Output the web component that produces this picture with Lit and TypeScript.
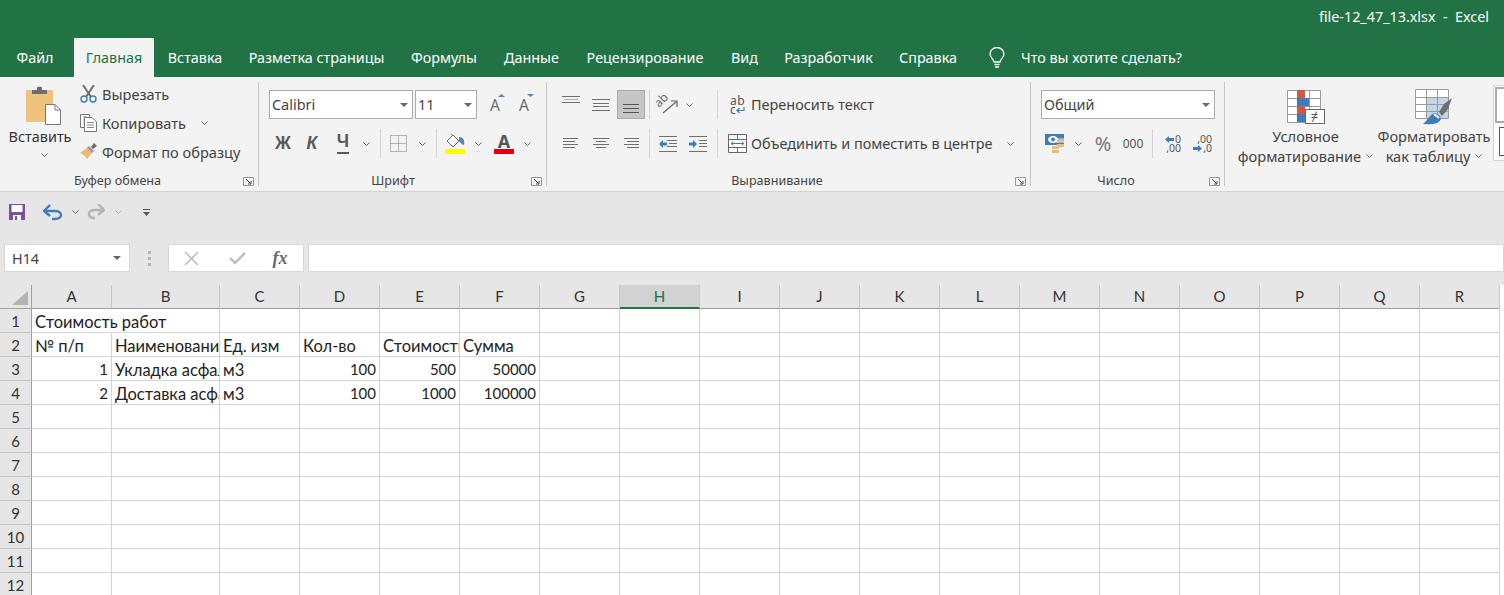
import { LitElement, html, css, TemplateResult } from 'lit';
import { customElement } from 'lit/decorators.js';
import { styleMap } from 'lit/directives/style-map.js';

type Tool = { w: number; sep?: boolean; icon?: TemplateResult; cls?: string };

// ---- small shared icons ----
const chev = html`<svg width="7" height="4" viewBox="0 0 7 4"><path d="M.5.5 3.5 3.5 6.5.5" fill="none" stroke="#666"/></svg>`;
const drop = html`<svg width="8" height="4" viewBox="0 0 8 4"><path d="M0 0H8L4 4Z" fill="#666"/></svg>`;
const launcher = html`<svg width="11" height="9" viewBox="0 0 11 9"><path d="M.5 8.5V.5H10.5V8.5H.5" fill="none" stroke="#999"/><path d="M3 2 8 7M8 4V7H5" fill="none" stroke="#555"/></svg>`;

const lines = (rows: [number, number][], w = 18, h = 14, col = '#6f6f6f') => html`
  <svg width=${w} height=${h} viewBox="0 0 ${w} ${h}">
    <path d=${rows.map((r, i) => `M${r[0]} ${i * 3 + 1.5}H${r[1]}`).join('')} fill="none" stroke=${col}/>
  </svg>`;

const alignTop = html`<svg width="18" height="18" viewBox="0 0 18 18"><path d="M0 .5H18M0 6.500H18" fill="none" stroke="#6f6f6f"/><path d="M2 3.500H16" fill="none" stroke="#b0b0b0"/></svg>`;
const alignMid = html`<svg width="18" height="14" viewBox="0 0 18 14"><path d="M0 1.500H18M1 5.500H17M1 8.500H17M0 12.500H18" fill="none" stroke="#6f6f6f"/></svg>`;
const alignBot = html`<svg width="18" height="18" viewBox="0 0 18 18"><path d="M1 8.500H17M1 12.500H17M1 16.500H17" fill="none" stroke="#555"/></svg>`;

const paste = html`<svg width="36" height="39" viewBox="0 0 36 39">
  <rect x="0" y="4" width="27" height="32" rx="1" fill="#edc37e"/>
  <path d="M6 8V4H11V1.5C11 .5 16 .5 16 1.5V4H21V8Z" fill="#6e6e6e"/>
  <path d="M19.5 18.5H29L34.500 24V38.500H19.500Z" fill="#fff" stroke="#777"/>
  <path d="M29 18.500V24H34.500" fill="none" stroke="#777"/>
</svg>`;
const scissors = html`<svg width="17" height="18" viewBox="0 0 17 18">
  <path d="M3 0 11 12M14 0 6 12" stroke="#6e6e6e" stroke-width="2" fill="none"/>
  <circle cx="4" cy="14" r="3" fill="none" stroke="#3f7cb9" stroke-width="1.400"/>
  <circle cx="13" cy="14" r="3" fill="none" stroke="#3f7cb9" stroke-width="1.400"/>
</svg>`;
const copy = html`<svg width="17" height="18" viewBox="0 0 17 18">
  <path d="M9.500 3.500V.5H.5V13.500H4.500" fill="#fff" stroke="#777"/>
  <path d="M4.500 3.500H12L16.500 8V17.500H4.500Z" fill="#fff" stroke="#777"/>
  <path d="M3 3H7M3 6H5M3 9H4M7 8.500H14M7 11H14M7 13.500H14" stroke="#888" fill="none"/>
</svg>`;
const painter = html`<svg width="17" height="17" viewBox="0 0 17 17">
  <path d="M0 10 7 5 12 10 7 16C5 13 3 11 0 10Z" fill="#e8bb76"/>
  <path d="M7 5 9 3 14 8 12 10Z" fill="#9a9a9a"/>
  <path d="M11 4 14 0 17 3 13 6Z" fill="#6a6a6a"/>
</svg>`;

const growA = (up: boolean) => html`<span class="grow">A<svg class="grow-tri" width="7" height="3" viewBox="0 0 7 3">
  <path d=${up ? 'M0 3 3.500 0 7 3Z' : 'M0 0H7L3.500 3Z'} fill="#4f86bd"/>
</svg></span>`;
const borders = html`<svg width="17" height="17" viewBox="0 0 17 17">
  <path d="M.5.5H16.500V16.500H.5ZM8.500.5V16.500M.5 8.500H16.500" fill="none" stroke="#777" stroke-dasharray="1 1"/>
</svg>`;
const fillColor = html`<svg width="21" height="21" viewBox="0 0 21 21">
  <path d="M2 8 8 2 14 8 8 14Z" fill="#fff" stroke="#666"/>
  <path d="M6 1 8 3" stroke="#666"/>
  <path d="M14 4C18 4 20 7 19 12 17 12 15 9 14 8Z" fill="#4f86bd"/>
  <rect x="0" y="16" width="20" height="5" fill="#ffff00"/>
</svg>`;
const fontColor = html`<span class="fcolor"><span class="fcolor-a">A</span><span class="fcolor-bar"></span></span>`;
const orientation = html`<svg width="22" height="20" viewBox="0 0 22 20">
  <text x="3" y="13" transform="rotate(-45 3 13)" font-family="Noto Sans" font-size="12" fill="#666">ab</text>
  <path d="M7 18 20 7M15 6H21V12" fill="none" stroke="#666" stroke-width="1.200"/>
</svg>`;
const indentDec = html`<svg width="18" height="16" viewBox="0 0 18 16">
  <path d="M0 .5H18M8 4.500H18M10 7.500H18M8 10.500H18M0 15.500H18" stroke="#6f6f6f" fill="none"/>
  <path d="M0 8 4 4V6.500H8V9.500H4V12Z" fill="#3f7cb9"/>
</svg>`;
const indentInc = html`<svg width="18" height="16" viewBox="0 0 18 16">
  <path d="M0 .5H18M10 4.500H18M10 7.500H18M10 10.500H18M0 15.500H18" stroke="#6f6f6f" fill="none"/>
  <path d="M8 8 4 4V6.500H0V9.500H4V12Z" fill="#3f7cb9"/>
</svg>`;
const wrap = html`<span class="wrapi"><span>ab</span><span class="wrapi-2">c<svg width="9" height="7" viewBox="0 0 9 7">
  <path d="M8 0V3.500H1M3.500 1 1 3.500 3.500 6" fill="none" stroke="#3f7cb9" stroke-width="1.200"/>
</svg></span></span>`;
const merge = html`<svg width="19" height="19" viewBox="0 0 19 19">
  <path d="M.5.5H18.500V18.500H.5ZM.5 5.500H18.500M.5 13.500H18.500M9.500.5V5.500M9.500 13.500V18.500" fill="#fff" stroke="#666"/>
  <path d="M3 9.500H16M5.500 7.500 3 9.500 5.500 11.500M13.500 7.500 16 9.500 13.500 11.500" fill="none" stroke="#3f7cb9"/>
</svg>`;
const currency = html`<svg width="20" height="19" viewBox="0 0 20 19">
  <rect x="0" y="0" width="19" height="11" fill="#3f7cb9"/>
  <ellipse cx="8" cy="5.500" rx="5" ry="3.500" fill="#fff"/>
  <circle cx="8" cy="5.500" r="2" fill="#3f7cb9"/>
  <path d="M7 11.500H13M11 5H19M11 8H19" stroke="#f3f3f3" fill="none"/>
  <path d="M12 6H19V9H12ZM12 10H19V13H12ZM7 12H14V15H7ZM7 16H14V19H7Z" fill="#e9bd78"/>
</svg>`;
const arrowL = html`<svg width="9" height="7" viewBox="0 0 9 7"><path d="M0 3.500 4 0V2H9V5H4V7Z" fill="#3f7cb9"/></svg>`;
const arrowR = html`<svg width="9" height="7" viewBox="0 0 9 7"><path d="M9 3.500 5 0V2H0V5H5V7Z" fill="#3f7cb9"/></svg>`;
const decLeft = html`<span class="dec"><span class="dec-r">${arrowL}<span>0</span></span><span class="dec-r dec-end">,00</span></span>`;
const decRight = html`<span class="dec"><span class="dec-r dec-end">,00</span><span class="dec-r">${arrowR}<span>,0</span></span></span>`;
const condFormat = html`<span class="cf"><svg width="38" height="34" viewBox="0 0 38 34">
  <path d="M.5.5H33.500V32.500H.5ZM10.500.5V32.500M22.500.5V32.500M.5 8.500H33.500M.5 16.500H33.500M.5 24.500H33.500" fill="#fff" stroke="#9a9a9a"/>
  <rect x="10" y="0" width="8" height="8" fill="#d0593f"/>
  <rect x="10" y="8" width="12" height="8" fill="#3f7cb9"/>
  <rect x="10" y="16" width="8" height="8" fill="#d0593f"/>
  <rect x="10" y="24" width="8" height="8" fill="#3f7cb9"/>
  <rect x="18.500" y="19.500" width="19" height="14" fill="#fff" stroke="#666"/>
</svg><span class="cf-ne">≠</span></span>`;
const tableFormat = html`<svg width="38" height="36" viewBox="0 0 38 36">
  <path d="M.5.5H33.500V29.500H.5Z" fill="#fff"/>
  <rect x="11" y="8" width="22" height="22" fill="#c4d5e8"/>
  <path d="M.5.5H33.500V29.500H.5ZM11.500.5V29.500M22.500.5V29.500M.5 8.500H33.500M.5 15.500H33.500M.5 22.500H33.500" fill="none" stroke="#9a9a9a"/>
  <path d="M37 9 29 15 24 23 27 27 33 20Z" fill="#6e6e6e"/>
  <path d="M8 35C12 32 14 27 19 24 22 24 26 27 26 30 24 35 16 36 8 35Z" fill="#3f7cb9"/>
  <path d="M19 25 24 29" stroke="#fff" stroke-width="2"/>
</svg>`;

// ---- data ----
const tabs = [
  { label: 'Файл', w: 70 }, { label: '', w: 4 }, { label: 'Главная', w: 80, active: true }, { label: 'Вставка', w: 82 },
  { label: 'Разметка страницы', w: 161 }, { label: 'Формулы', w: 94 }, { label: 'Данные', w: 81 },
  { label: 'Рецензирование', w: 146 }, { label: 'Вид', w: 53 }, { label: 'Разработчик', w: 115 }, { label: 'Справка', w: 84 },
];

const B = (t: string, c = '') => html`<span class="glyph ${c}">${t}</span>`;

const fontRow2: Tool[] = [
  { w: 28, icon: B('Ж') }, { w: 30, icon: B('К', 'ital') }, { w: 32, icon: B('Ч', 'under') }, { w: 14, icon: chev }, { w: 7 }, { w: 1, sep: true },
  { w: 34, icon: borders }, { w: 14, icon: chev }, { w: 7 }, { w: 1, sep: true },
  { w: 36, icon: fillColor }, { w: 10, icon: chev }, { w: 3 }, { w: 36, icon: fontColor }, { w: 10, icon: chev },
];
const alignRow1: Tool[] = [
  { w: 28, icon: alignTop }, { w: 32, icon: alignMid }, { w: 28, icon: alignBot, cls: 'selected' }, { w: 4 }, { w: 1, sep: true },
  { w: 34, icon: orientation }, { w: 10, icon: chev }, { w: 23 }, { w: 1, sep: true }, { w: 11 }, { w: 18, icon: wrap }, { w: 4 },
];
const alignRow2: Tool[] = [
  { w: 28, icon: lines([[1, 16], [1, 13], [1, 16], [1, 13]]) }, { w: 32, icon: lines([[1, 17], [4, 14], [1, 17], [4, 14]]) },
  { w: 28, icon: lines([[2, 17], [5, 17], [2, 17], [5, 17]]) }, { w: 4 }, { w: 1, sep: true },
  { w: 36, icon: indentDec }, { w: 24, icon: indentInc }, { w: 7 }, { w: 1, sep: true }, { w: 9 }, { w: 20, icon: merge }, { w: 4 },
];
const numberRow2: Tool[] = [
  { w: 28, icon: currency }, { w: 18, icon: chev }, { w: 32, icon: html`<span class="pct">%</span>` }, { w: 28, icon: html`<span class="thou">000</span>` },
  { w: 5 }, { w: 1, sep: true }, { w: 36, icon: decLeft }, { w: 26, icon: decRight },
];

const columns = [
  { n: 'A', w: 80 }, { n: 'B', w: 108 }, { n: 'C', w: 80 }, { n: 'D', w: 80 }, { n: 'E', w: 80 }, { n: 'F', w: 80 },
  { n: 'G', w: 80 }, { n: 'H', w: 80 }, { n: 'I', w: 80 }, { n: 'J', w: 80 }, { n: 'K', w: 80 }, { n: 'L', w: 80 },
  { n: 'M', w: 80 }, { n: 'N', w: 80 }, { n: 'O', w: 80 }, { n: 'P', w: 80 }, { n: 'Q', w: 80 }, { n: 'R', w: 80 },
];

type Cell = string | number;
const sheet: Cell[][] = [
  ['Стоимость работ'],
  ['№ п/п', 'Наименование', 'Ед. изм', 'Кол-во', 'Стоимость', 'Сумма'],
  [1, 'Укладка асфальта', 'м3', 100, 500, 50000],
  [2, 'Доставка асфальта', 'м3', 100, 1000, 100000],
];

@customElement('app-root')
export class AppRoot extends LitElement {
  static styles = css`
    :host {
      display: block;
      width: 1504px;
      height: 595px;
      overflow: hidden;
      background: #fff;
      font-family: 'Noto Sans', sans-serif;
      font-size: 14.35px;
      color: #444;
    }

    /* Title and tabs */
    .title {
      height: 38px;
      background: #217346;
      color: #fff;
      display: flex;
      align-items: center;
      justify-content: flex-end;
      padding: 0 15px 5px 0;
      box-sizing: border-box;
      white-space: pre;
    }
    .tabs {
      height: 39px;
      background: #217346;
      color: #fff;
      display: flex;
    }
    .tab {
      display: flex;
      align-items: center;
      justify-content: center;
      white-space: nowrap;
      flex: none;
    }
    .tab--active {
      background: #f3f3f3;
      color: #217346;
    }
    .bulb {
      width: 51px;
      padding-left: 3px;
      box-sizing: border-box;
      display: flex;
      align-items: center;
      justify-content: center;
    }

    /* Ribbon */
    .ribbon {
      height: 115px;
      box-sizing: border-box;
      background: #f3f3f3;
      border-bottom: 1px solid #d2d2d2;
      display: flex;
      overflow: hidden;
      font-size: 14.45px;
    }
    .group {
      position: relative;
      flex: none;
      display: flex;
      flex-direction: column;
      box-sizing: border-box;
      padding: 13px 0 0 10px;
    }
    .group-sep {
      flex: none;
      width: 1px;
      height: 104px;
      margin-top: 5px;
      background: #c6c6c6;
    }
    .group-label {
      position: absolute;
      left: 0;
      right: 23px;
      bottom: 0;
      height: 21px;
      text-align: center;
      font-size: 12.6px;
      line-height: 21px;
      color: #444;
    }
    .g-font .group-label { right: 19px; }
    .launcher {
      position: absolute;
      right: 4px;
      bottom: 5px;
      display: flex;
    }
    .g-clip { width: 258px; padding: 0; flex-direction: row; }
    .g-font { width: 287px; }
    .g-align { width: 483px; }
    .g-num { width: 193px; }
    .g-styles { flex: 1; padding: 0; flex-direction: row; font-size: 14.6px; }

    .paste {
      width: 78px;
      margin-left: 1px;
      display: flex;
      flex-direction: column;
      align-items: center;
      padding-top: 9px;
      box-sizing: border-box;
      color: #333;
    }
    .paste svg:first-child { margin-left: 8px; }
    .paste .lbl { margin-top: 2px; line-height: 20px; }
    .paste .ch { margin-top: 6px; display: flex; }
    .clip-list { padding-top: 2px; font-size: 14.6px; }
    .clip-row {
      height: 29px;
      display: flex;
      align-items: center;
      color: #444;
    }
    .clip-icon {
      width: 23px;
      display: flex;
      padding-left: 1px;
      box-sizing: border-box;
    }
    .copy-label { width: 96px; }
    .clip-ch { width: 12px; display: flex; justify-content: center; }

    .row {
      display: flex;
      align-items: center;
      height: 29px;
      white-space: nowrap;
    }
    .row + .row { margin-top: 10px; }
    .tool {
      flex: none;
      height: 29px;
      display: flex;
      align-items: center;
      justify-content: center;
      box-sizing: border-box;
    }
    .tool--sep {
      height: 29px;
      background: #d4d4d4;
    }
    .selected {
      background: #c6c6c6;
      border: 1px solid #a8a8a8;
    }
    .glyph {
      font-family: 'Liberation Sans', sans-serif;
      font-weight: 700;
      font-size: 17.5px;
      color: #5a5a5a;
      line-height: 1;
    }
    .ital { font-style: italic; }
    .under { border-bottom: 2px solid #5a5a5a; padding-bottom: 1px; }
    .pct { font-size: 20px; color: #777; }
    .thou { font-size: 12px; color: #555; }
    .grow {
      position: relative;
      font-size: 15.5px;
      line-height: 16px;
      color: #6a6a6a;
    }
    .grow-tri {
      position: absolute;
      right: -5px;
      top: -3px;
    }
    .fcolor {
      display: flex;
      flex-direction: column;
      align-items: center;
      width: 20px;
    }
    .fcolor-a {
      font-weight: 700;
      font-size: 18px;
      line-height: 15px;
      height: 15px;
      color: #555;
    }
    .fcolor-bar {
      width: 20px;
      height: 5px;
      background: #e3000f;
    }
    .wrapi {
      display: flex;
      flex-direction: column;
      width: 16px;
      font-size: 12px;
      line-height: 9px;
      letter-spacing: .5px;
      color: #555;
    }
    .wrapi-2 { display: flex; align-items: flex-end; gap: 0; }
    .dec {
      display: flex;
      flex-direction: column;
      width: 20px;
      font-size: 10.5px;
      line-height: 9px;
      color: #555;
    }
    .dec-r { display: flex; align-items: center; justify-content: flex-end; gap: 1px; height: 9px; }
    .dec-end { justify-content: flex-end; }
    .combo {
      flex: none;
      height: 29px;
      box-sizing: border-box;
      background: #fff;
      border: 1px solid #ababab;
      display: flex;
      align-items: center;
      justify-content: space-between;
      padding: 0 4px 0 2px;
      color: #444;
    }
    .combo--font { width: 144px; }
    .combo--size { width: 62px; margin-left: 2px; }
    .combo--num { width: 174px; }
    .merge-label { width: 252px; }

    .big {
      flex: none;
      display: flex;
      flex-direction: column;
      align-items: center;
      box-sizing: border-box;
      line-height: 20px;
      color: #444;
    }
    .big--cond { width: 145px; margin-left: 8px; padding-top: 13px; }
    .big--table { width: 112px; padding-top: 12px; }
    .big--cond .txt { margin-top: 2px; }
    .big--table .txt { margin-top: 1px; }
    .big .ln { display: flex; align-items: center; gap: 5px; white-space: nowrap; }
    .cf { position: relative; display: flex; }
    .cf-ne {
      position: absolute;
      left: 19px;
      top: 20px;
      width: 18px;
      height: 13px;
      line-height: 13px;
      text-align: center;
      font-size: 13px;
      color: #555;
    }
    .gallery {
      flex: none;
      width: 30px;
      height: 76px;
      margin: 8px 0 0 3px;
      background: #fff;
      border: 1px solid #d4d4d4;
      box-sizing: border-box;
      padding: 1px;
      display: flex;
      flex-direction: column;
      gap: 4px;
    }
    .gal-a {
      height: 36px;
      background: #fff;
      border: 2px solid #ababab;
      box-sizing: border-box;
    }
    .gal-b {
      height: 29px;
      margin-left: 4px;
      background: #fff;
      border: 1px solid #555;
      box-sizing: border-box;
    }

    /* Quick access */
    .qat {
      height: 40px;
      background: #e6e6e6;
      display: flex;
      align-items: center;
      padding-left: 9px;
      box-sizing: border-box;
    }
    .qat-item { flex: none; display: flex; align-items: center; justify-content: center; }
    .q-save { width: 16px; margin-right: 18px; }
    .q-undo { width: 20px; }
    .q-ch { width: 24px; }
    .q-redo { width: 18px; }
    .q-ch2 { width: 26px; }
    .q-more { width: 11px; margin-left: 10px; }

    /* Formula bar */
    .fbar {
      height: 53px;
      background: #e6e6e6;
      box-sizing: border-box;
      padding: 12px 0 13px 4px;
      display: flex;
    }
    .fbox {
      background: #fff;
      border: 1px solid #d8d8d8;
      box-sizing: border-box;
      display: flex;
      align-items: center;
    }
    .namebox {
      width: 126px;
      justify-content: space-between;
      padding: 0 8px 0 7px;
      color: #444;
    }
    .dots {
      width: 38px;
      display: flex;
      flex-direction: column;
      align-items: center;
      justify-content: center;
      gap: 3px;
    }
    .dots i { width: 3px; height: 3px; background: #b4b4b4; display: block; }
    .fbtns { width: 136px; }
    .fbtn { display: flex; align-items: center; justify-content: center; flex: none; height: 100%; }
    .f-x { width: 44px; }
    .f-ok { width: 48px; }
    .f-fx {
      width: 38px;
      font-family: 'Liberation Serif', serif;
      font-style: italic;
      font-weight: 700;
      font-size: 18px;
      color: #6a6a6a;
    }
    .finput { flex: 1; margin-left: 4px; }

    /* Sheet */
    .sheet {
      display: grid;
      font-family: Lato, 'Noto Sans', sans-serif;
      font-size: 15px;
      color: #222;
    }
    .corner, .ch-cell, .rh-cell {
      background: #e6e6e6;
      box-sizing: border-box;
    }
    .corner {
      height: 24px;
      border-right: 1px solid #a0a0a0;
      border-bottom: 1px solid #a0a0a0;
      display: flex;
      align-items: flex-end;
      justify-content: flex-end;
      padding: 0 3px 3px 0;
    }
    .ch-cell {
      height: 24px;
      border-right: 1px solid #c6c6c6;
      border-bottom: 1px solid #a0a0a0;
      display: flex;
      align-items: center;
      justify-content: center;
      color: #333;
      padding-bottom: 1px;
    }
    .ch-cell--sel {
      background: #d2d2d2;
      color: #217346;
      border-bottom: 2px solid #217346;
      padding-bottom: 0;
    }
    .rh-cell {
      height: 24px;
      border-right: 1px solid #a0a0a0;
      border-bottom: 1px solid #c6c6c6;
      display: flex;
      align-items: center;
      justify-content: center;
      color: #333;
    }
    .cell {
      height: 24px;
      box-sizing: border-box;
      border-right: 1px solid #d4d4d4;
      border-bottom: 1px solid #d4d4d4;
      padding: 0 3px;
      font-size: 16.5px;
      line-height: 26px;
      white-space: nowrap;
      overflow: hidden;
    }
    .cell--num { text-align: right; font-size: 15px; line-height: 25px; }
    .cell--spill { overflow: visible; border-right-color: transparent; }
  `;

  private _tools(items: Tool[]) {
    return items.map(t => html`
      <div class="tool ${t.sep ? 'tool--sep' : ''} ${t.cls ?? ''}" style=${styleMap({ width: `${t.w}px` })}>${t.icon ?? ''}</div>
    `);
  }

  private _renderTitle() {
    return html`
      <div class="title">file-12_47_13.xlsx  -  Excel</div>
      <div class="tabs">
        ${tabs.map(t => html`
          <div class="tab ${t.active ? 'tab--active' : ''}" style=${styleMap({ width: `${t.w}px` })}>${t.label}</div>
        `)}
        <div class="bulb">
          <svg width="18" height="22" viewBox="0 0 18 22">
            <path d="M6 15C6 12 2 11 2 7A7 6.500 0 0 1 16 7C16 11 12 12 12 15Z" fill="none" stroke="#fff" stroke-width="1.300"/>
            <path d="M6.500 17.500H11.500M7 20H11" stroke="#fff" stroke-width="1.300"/>
          </svg>
        </div>
        <div class="tab">Что вы хотите сделать?</div>
      </div>
    `;
  }

  private _renderRibbon() {
    return html`
      <div class="ribbon">
        <div class="group g-clip">
          <div class="paste">
            ${paste}
            <div class="lbl">Вставить</div>
            <div class="ch">${chev}</div>
          </div>
          <div class="clip-list">
            <div class="clip-row"><span class="clip-icon">${scissors}</span>Вырезать</div>
            <div class="clip-row">
              <span class="clip-icon">${copy}</span><span class="copy-label">Копировать</span><span class="clip-ch">${chev}</span>
            </div>
            <div class="clip-row"><span class="clip-icon">${painter}</span>Формат по образцу</div>
          </div>
          <div class="group-label">Буфер обмена</div>
          <div class="launcher">${launcher}</div>
        </div>
        <div class="group-sep"></div>

        <div class="group g-font">
          <div class="row">
            <div class="combo combo--font">Calibri ${drop}</div>
            <div class="combo combo--size">11 ${drop}</div>
            ${this._tools([{ w: 36, icon: growA(true) }, { w: 22, icon: growA(false) }])}
          </div>
          <div class="row">${this._tools(fontRow2)}</div>
          <div class="group-label">Шрифт</div>
          <div class="launcher">${launcher}</div>
        </div>
        <div class="group-sep"></div>

        <div class="group g-align">
          <div class="row">${this._tools(alignRow1)}<span>Переносить текст</span></div>
          <div class="row">
            ${this._tools(alignRow2)}
            <span class="merge-label">Объединить и поместить в центре</span>
            ${this._tools([{ w: 14, icon: chev }])}
          </div>
          <div class="group-label">Выравнивание</div>
          <div class="launcher">${launcher}</div>
        </div>
        <div class="group-sep"></div>

        <div class="group g-num">
          <div class="row"><div class="combo combo--num">Общий ${drop}</div></div>
          <div class="row">${this._tools(numberRow2)}</div>
          <div class="group-label">Число</div>
          <div class="launcher">${launcher}</div>
        </div>
        <div class="group-sep"></div>

        <div class="group g-styles">
          <div class="big big--cond">
            ${condFormat}
            <div class="txt ln">Условное</div>
            <div class="ln">форматирование ${chev}</div>
          </div>
          <div class="big big--table">
            ${tableFormat}
            <div class="txt ln">Форматировать</div>
            <div class="ln">как таблицу ${chev}</div>
          </div>
          <div class="gallery">
            <div class="gal-a"></div>
            <div class="gal-b"></div>
          </div>
        </div>
      </div>
    `;
  }

  private _renderBars() {
    return html`
      <div class="qat">
        <div class="qat-item q-save">
          <svg width="16" height="16" viewBox="0 0 16 16">
            <path d="M0 0H16V16H0Z" fill="#7b4fa0"/>
            <rect x="2.500" y="1" width="11" height="7" fill="#fff"/>
            <rect x="4" y="11" width="8" height="5" fill="#fff"/>
            <rect x="6" y="12" width="2" height="4" fill="#7b4fa0"/>
          </svg>
        </div>
        <div class="qat-item q-undo">
          <svg width="20" height="17" viewBox="0 0 20 17">
            <path d="M3 7H12C20 7 20 15 12 15H9" fill="none" stroke="#3f7cb9" stroke-width="2.400"/>
            <path d="M7 1 1 7 7 12" fill="none" stroke="#3f7cb9" stroke-width="2.400"/>
          </svg>
        </div>
        <div class="qat-item q-ch">${chev}</div>
        <div class="qat-item q-redo">
          <svg width="18" height="17" viewBox="0 0 18 17">
            <path d="M15 6H8C0 6 0 14 7 14H8" fill="none" stroke="#b4b4b4" stroke-width="2.400"/>
            <path d="M11 0 17 6 11 11" fill="none" stroke="#b4b4b4" stroke-width="2.400"/>
          </svg>
        </div>
        <div class="qat-item q-ch2">
          <svg width="7" height="4" viewBox="0 0 7 4"><path d="M.5.5 3.500 3.500 6.500.5" fill="none" stroke="#aaa"/></svg>
        </div>
        <div class="qat-item q-more">
          <svg width="7" height="7" viewBox="0 0 7 7"><path d="M0 .5H7" stroke="#555"/><path d="M0 3H7L3.500 7Z" fill="#555"/></svg>
        </div>
      </div>
      <div class="fbar">
        <div class="fbox namebox"><span>H14</span>${drop}</div>
        <div class="dots"><i></i><i></i><i></i></div>
        <div class="fbox fbtns">
          <div class="fbtn f-x">
            <svg width="15" height="15" viewBox="0 0 15 15"><path d="M1 1 14 14M14 1 1 14" stroke="#bcbcbc" stroke-width="1.600" fill="none"/></svg>
          </div>
          <div class="fbtn f-ok">
            <svg width="17" height="14" viewBox="0 0 17 14"><path d="M1 7 6 12 16 2" stroke="#c0c0c0" stroke-width="2.600" fill="none"/></svg>
          </div>
          <div class="fbtn f-fx">fx</div>
        </div>
        <div class="fbox finput"></div>
      </div>
    `;
  }

  private _renderSheet() {
    const template = `32px ${columns.map(c => `${c.w}px`).join(' ')}`;
    const rows = Array.from({ length: 12 }, (_, i) => i);
    return html`
      <div class="sheet" style=${styleMap({ gridTemplateColumns: template })}>
        <div class="corner">
          <svg width="16" height="14" viewBox="0 0 16 14"><path d="M16 0V14H0Z" fill="#b4b4b4"/></svg>
        </div>
        ${columns.map(c => html`<div class="ch-cell ${c.n === 'H' ? 'ch-cell--sel' : ''}">${c.n}</div>`)}
        ${rows.map(r => html`
          <div class="rh-cell">${r + 1}</div>
          ${columns.map((_, c) => {
            const v = sheet[r]?.[c];
            const cls = typeof v === 'number' ? 'cell--num' : r === 0 && c === 0 ? 'cell--spill' : '';
            return html`<div class="cell ${cls}">${v ?? ''}</div>`;
          })}
        `)}
      </div>
    `;
  }

  render() {
    return html`${this._renderTitle()}${this._renderRibbon()}${this._renderBars()}${this._renderSheet()}`;
  }
}

declare global {
  interface HTMLElementTagNameMap {
    'app-root': AppRoot;
  }
}
